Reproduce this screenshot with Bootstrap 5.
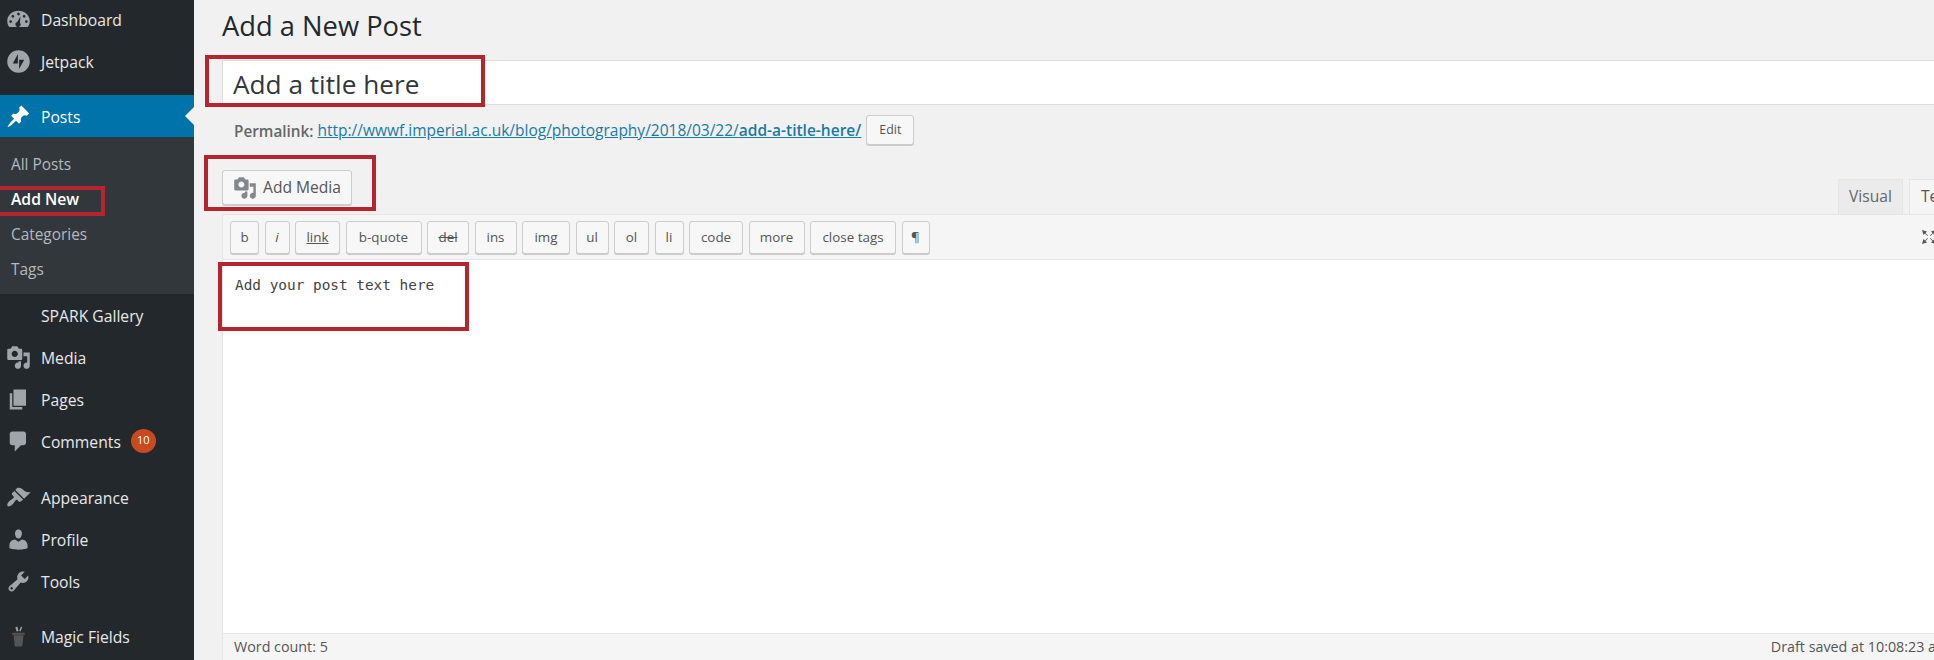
<!doctype html>
<html lang="en"><head><meta charset="utf-8"><title>Add a New Post</title>
<link href="https://cdn.jsdelivr.net/npm/bootstrap@5.3.0/dist/css/bootstrap.min.css" rel="stylesheet">
<style>
html,body{height:660px;overflow:hidden}
body{background:#f1f1f1;font-family:"Open Sans","Noto Sans",sans-serif;color:#444;position:relative}
.wp-side{width:194px;height:660px;background:#23282d;flex:none;margin:0;position:relative}
.wp-menu{margin:-2px 0 0;padding:0;list-style:none}
.wp-row{height:42px;display:flex;align-items:center;color:#e8e8e8;font-size:15.7px;text-decoration:none}
.wp-txt{padding-top:3px}
.wp-ico{width:41px;flex:none;display:flex;justify-content:center;padding:1px 5px 0 0}
.wp-ico svg{width:25px;height:25px;fill:#a0a5aa}
.wp-ico svg .wp-hat{fill:#555}
.wp-gap{margin-top:13px}
.wp-gap14{margin-top:14px}
.wp-cur{background:#0073aa;color:#fff;position:relative}
.wp-cur svg{fill:#fff}
.wp-cur::after{content:"";position:absolute;right:0;top:12px;border:9px solid transparent;border-right-color:#f1f1f1;border-left-width:0}
.wp-subm{background:#32373c;padding:10px 0 7px;list-style:none;margin:0}
.wp-subm a{display:flex;align-items:center;height:35px;padding-left:11px;color:#b4b9be;font-size:15.4px;text-decoration:none}
.wp-subm a.wp-on{color:#fff;font-weight:600;font-size:15.7px}
.wp-bub{display:inline-flex;align-items:center;justify-content:center;margin-left:10px;width:25px;height:24px;border-radius:50%;background:#ca4a1f;color:#fff;font-size:11px;margin-top:-1px}
.wp-main{flex:1 1 auto;min-width:0;overflow:hidden;padding-left:28px}
.wp-inner{width:1745px}
.wp-h{font-size:27.3px;font-weight:400;color:#23282d;margin:0;height:60px;line-height:52px}
.wp-title{height:45px;background:#fff;border:1px solid #ddd;font-size:26.2px;color:#32373c;padding:0 10px;line-height:46px}
.wp-perm{height:50px;font-size:15.3px;padding:2px 0 0 12px;color:#666}
.wp-perm a{color:#1a7ba6;margin-left:4px;font-size:15.5px}
.wp-perm b{font-weight:600}
.wp-perm .wp-lab{font-weight:600}
.wp-btn{border:1px solid #ccc;background:#f7f7f7;border-radius:3px;box-shadow:0 1px 0 #ccc;color:#555;display:inline-flex;align-items:center;justify-content:center}
.wp-edit{width:48px;height:30px;font-size:12.4px;margin-left:5px;margin-top:-2px}
.wp-mediarow{height:59px}
.wp-media{width:130px;height:35px;font-size:15.6px;margin-top:15px;gap:6px}
.wp-media svg{width:24px;height:24px;fill:#82878c}
.wp-tab{width:65px;flex:none;height:35px;background:#ebebeb;border:1px solid #e5e5e5;border-bottom:0;font-size:15.6px;color:#666;display:flex;align-items:center;justify-content:center;margin-left:6px}
.wp-tab.wp-act{background:#f5f5f5;color:#555;justify-content:flex-start;padding-left:11px}
.wp-tabs{margin-right:-7px}
.wp-wrap{border:1px solid #e5e5e5;background:#fff}
.wp-bar{height:45px;background:#f5f5f5;border-bottom:1px solid #e5e5e5;padding:0 0 0 7px;gap:5.5px}
.wp-q{height:33px;font-size:13.4px;background:#f7f7f7;border:1px solid #ccc;border-radius:3px;box-shadow:0 1px 0 #ccc;color:#555;display:inline-flex;align-items:center;justify-content:center}
.wp-q:nth-child(1){width:29px}.wp-q:nth-child(2){width:25px}.wp-q:nth-child(3){width:45px}.wp-q:nth-child(4){width:76px}.wp-q:nth-child(5){width:42px}.wp-q:nth-child(6){width:42px}.wp-q:nth-child(7){width:48px}.wp-q:nth-child(8){width:33px}.wp-q:nth-child(9){width:35px}.wp-q:nth-child(10){width:29px}.wp-q:nth-child(11){width:54px}.wp-q:nth-child(12){width:56px}.wp-q:nth-child(13){width:86px}.wp-q:nth-child(14){width:28px}
.wp-area{height:373px;font-family:"DejaVu Sans Mono",monospace;font-size:14.4px;color:#444;padding:15px 12px;line-height:20px}
.wp-foot{height:27px;background:#f5f5f5;border-top:1px solid #e5e5e5;font-size:14.3px;color:#555;padding:0 13px 0 11px}
.wp-red{position:absolute;border:4px solid #b5252f;pointer-events:none}
.wp-full{margin-left:auto;width:49px;display:flex}
.wp-full svg{width:20px;height:20px;margin-left:2px;fill:#555}
</style></head><body>
<svg width="0" height="0" class="d-none"><defs>
<symbol id="i-media" viewBox="0 0 20 20"><path d="M13 11V4c0-.55-.45-1-1-1h-1.670L9 1H5L3.670 3H2c-.55 0-1 .45-1 1v7c0 .55.45 1 1 1h10c.55 0 1-.45 1-1zM7 4.500c1.380 0 2.500 1.120 2.500 2.500S8.380 9.500 7 9.500 4.500 8.380 4.500 7 5.620 4.500 7 4.500zM14 6h5v10.500c0 1.380-1.120 2.500-2.500 2.500S14 17.880 14 16.500s1.120-2.500 2.500-2.500c.17 0 .34.02.5.05V9h-3V6zm-4 8.050V13h2v3.500c0 1.380-1.120 2.500-2.500 2.500S7 17.880 7 16.500 8.120 14 9.500 14c.17 0 .34.02.5.05z"/></symbol>
</defs></svg>
<div class="d-flex">
<aside class="wp-side">
<ul class="wp-menu">
<li><a class="wp-row" href="#"><span class="wp-ico"><svg viewBox="0 0 20 20"><path fill-rule="evenodd" d="M2.600 16C1.600 14.700 1 13 1 11.200 1 6.500 5 3 10 3s9 3.500 9 8.200c0 1.800-.6 3.500-1.600 4.800zM10 4.500a1.100 1.100 0 1 0 0 2.200 1.100 1.100 0 0 0 0-2.200zM5.500 6.300a1.100 1.100 0 1 0 0 2.200 1.100 1.100 0 0 0 0-2.200zM14.500 6.300a1.100 1.100 0 1 0 0 2.200 1.100 1.100 0 0 0 0-2.200zM3.700 10.500a1.100 1.100 0 1 0 0 2.200 1.100 1.100 0 0 0 0-2.200zM16.300 10.500a1.100 1.100 0 1 0 0 2.200 1.100 1.100 0 0 0 0-2.200zM11.500 7.500 9 12a2 2 0 1 0 2.200.7z"/></svg></span><span class="wp-txt">Dashboard</span></a></li>
<li><a class="wp-row" href="#"><span class="wp-ico"><svg viewBox="0 0 20 20"><path fill-rule="evenodd" d="M10 1a9 9 0 1 0 0 18 9 9 0 0 0 0-18zM9.500 4v7.500H5.400zM10.500 16V8.500h4.100z"/></svg></span><span class="wp-txt">Jetpack</span></a></li>
<li class="wp-gap"><a class="wp-row wp-cur" href="#"><span class="wp-ico"><svg viewBox="0 0 20 20"><path d="M10.440 3.020l1.820-1.820 6.360 6.350-1.830 1.820c-1.050-.68-2.480-.57-3.410.36l-.75.75c-.92.93-1.040 2.350-.35 3.410l-1.830 1.820-2.410-2.410-2.800 2.790c-.42.42-3.380 2.710-3.800 2.290s1.860-3.390 2.280-3.810l2.790-2.790L4.100 9.360l1.830-1.820c1.050.69 2.480.57 3.400-.36l.75-.75c.93-.92 1.040-2.350.36-3.410z"/></svg></span><span class="wp-txt">Posts</span></a>
<ul class="wp-subm">
<li><a href="#">All Posts</a></li>
<li><a class="wp-on" href="#">Add New</a></li>
<li><a href="#">Categories</a></li>
<li><a href="#">Tags</a></li>
</ul></li>
<li><a class="wp-row" href="#"><span class="wp-ico"></span><span class="wp-txt">SPARK Gallery</span></a></li>
<li><a class="wp-row" href="#"><span class="wp-ico"><svg><use href="#i-media"/></svg></span><span class="wp-txt">Media</span></a></li>
<li><a class="wp-row" href="#"><span class="wp-ico"><svg viewBox="0 0 20 20"><path d="M6 15V2h10v13H6zm-1 1h8v2H3V5h2v11z"/></svg></span><span class="wp-txt">Pages</span></a></li>
<li><a class="wp-row" href="#"><span class="wp-ico"><svg viewBox="0 0 20 20"><path d="M5 2h9c1.100 0 2 .9 2 2v7c0 1.100-.9 2-2 2h-2l-5 5v-5H5c-1.100 0-2-.9-2-2V4c0-1.100.9-2 2-2z"/></svg></span><span class="wp-txt">Comments</span><span class="wp-bub">10</span></a></li>
<li class="wp-gap14"><a class="wp-row" href="#"><span class="wp-ico"><svg viewBox="0 0 20 20"><path d="M14.480 11.060L7.410 3.990l1.500-1.500c.5-.56 2.300-.47 3.510.32 1.210.8 1.430 1.280 2.910 2.100 1.180.64 2.450 1.260 4.450.85zm-.71.71L6.700 4.700 4.930 6.470c-.39.39-.39 1.020 0 1.410l1.060 1.060c.39.39.39 1.030 0 1.420-.6.6-1.430 1.110-2.210 1.690-.35.26-.7.53-1.010.84-1.340 1.340-2.300 3.200-1.500 4s2.660-.16 4-1.500c.31-.31.58-.66.84-1.010.58-.78 1.090-1.610 1.690-2.210.39-.39 1.030-.39 1.420 0l1.060 1.060c.39.39 1.020.39 1.410 0z"/></svg></span><span class="wp-txt">Appearance</span></a></li>
<li><a class="wp-row" href="#"><span class="wp-ico"><svg viewBox="0 0 20 20"><path d="M10 9.250c-2.270 0-2.730-3.440-2.730-3.440C7 4.020 7.820 2 9.970 2c2.160 0 2.980 2.020 2.710 3.810 0 0-.41 3.440-2.680 3.440zm0 2.570L12.720 10c2.390 0 4.520 2.330 4.520 4.530v2.490s-3.650 1.130-7.240 1.130c-3.650 0-7.240-1.130-7.240-1.130v-2.490c0-2.250 1.940-4.480 4.470-4.480z"/></svg></span><span class="wp-txt">Profile</span></a></li>
<li><a class="wp-row" href="#"><span class="wp-ico"><svg viewBox="0 0 20 20"><path d="M16.680 9.770c-1.340 1.340-3.300 1.670-4.950.99l-5.410 6.520c-.99.99-2.590.99-3.580 0s-.99-2.590 0-3.570l6.520-5.420c-.68-1.650-.35-3.610.99-4.950 1.280-1.280 3.120-1.620 4.720-1.060l-2.890 2.890 2.820 2.820 2.860-2.870c.53 1.580.18 3.390-1.080 4.650zM3.810 16.210c.4.39 1.040.39 1.430 0 .4-.4.4-1.040 0-1.430-.39-.4-1.030-.4-1.430 0-.39.39-.39 1.030 0 1.430z"/></svg></span><span class="wp-txt">Tools</span></a></li>
<li class="wp-gap"><a class="wp-row" href="#"><span class="wp-ico"><svg viewBox="0 0 20 20"><path class="wp-hat" d="M6 9h8l-1 9H7zM5 7h10v1.500H5z"/><path d="M9 2l1 3.500-1.500.5-1-3.500zM13 2.500l-1.500 3.500-1-.4L12 2z"/></svg></span><span class="wp-txt">Magic Fields</span></a></li>
</ul>
</aside>
<main class="wp-main"><div class="wp-inner">
<h1 class="wp-h">Add a New Post</h1>
<div class="wp-title">Add a title here</div>
<div class="wp-perm d-flex align-items-center"><span class="wp-lab">Permalink:</span> <a href="#">http://wwwf.imperial.ac.uk/blog/photography/2018/03/22/<b>add-a-title-here/</b></a><span class="wp-btn wp-edit">Edit</span></div>
<div class="wp-mediarow d-flex justify-content-between">
<span class="wp-btn wp-media"><svg><use href="#i-media"/></svg>Add Media</span>
<div class="wp-tabs d-flex align-items-end"><span class="wp-tab">Visual</span><span class="wp-tab wp-act">Text</span></div>
</div>
<div class="wp-wrap">
<div class="wp-bar d-flex align-items-center">
<span class="wp-q">b</span><span class="wp-q fst-italic">i</span><span class="wp-q text-decoration-underline">link</span><span class="wp-q">b-quote</span><span class="wp-q text-decoration-line-through">del</span><span class="wp-q">ins</span><span class="wp-q">img</span><span class="wp-q">ul</span><span class="wp-q">ol</span><span class="wp-q">li</span><span class="wp-q">code</span><span class="wp-q">more</span><span class="wp-q">close tags</span><span class="wp-q">¶</span>
<span class="wp-full"><svg viewBox="0 0 20 20"><path d="M3 3l5 1.500-1.500 1.500L9 8.500 8.500 9 6 6.500 4.500 8zM3 17l1.500-5L6 13.500 8.500 11l.5.500L6.500 14 8 15.500zM17 3l-5 1.500 1.500 1.500L11 8.500l.5.500L14 6.500 15.500 8zM17 17l-1.500-5-1.500 1.500L11.500 11l-.5.500 2.500 2.500-1.500 1.500z"/></svg></span>
</div>
<div class="wp-area">Add your post text here</div>
<div class="wp-foot d-flex align-items-center justify-content-between"><span>Word count: 5</span><span>Draft saved at 10:08:23 am.</span></div>
</div>
</div></main>
</div>
<div class="wp-red" style="left:-4px;top:186px;width:109px;height:30px"></div>
<div class="wp-red" style="left:205px;top:55px;width:280px;height:52px"></div>
<div class="wp-red" style="left:204px;top:155px;width:172px;height:56px"></div>
<div class="wp-red" style="left:218px;top:262px;width:251px;height:69px"></div>
</body></html>
